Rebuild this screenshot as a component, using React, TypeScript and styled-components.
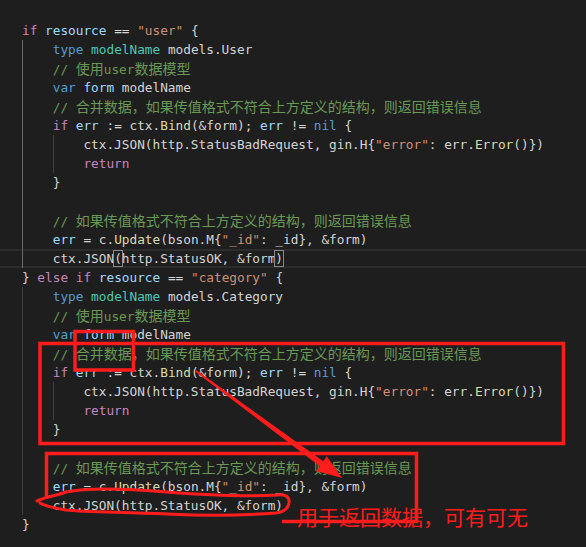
import React from 'react';
import styled, { createGlobalStyle } from 'styled-components';

type Kind = 'kw' | 'st' | 'ty' | 'va' | 'fn' | 'str' | 'cm' | 'pl' | 'br';
type Tok = [string, Kind];

interface CodeLine {
  indent: number;
  toks: Tok[];
  current?: boolean;
  active?: boolean;
}

const colors: Record<Kind, string> = {
  kw: '#c586c0',
  st: '#569cd6',
  ty: '#4ec9b0',
  va: '#9cdcfe',
  fn: '#dcdcaa',
  str: '#ce9178',
  cm: '#6a9955',
  pl: '#d4d4d4',
  br: '#d4d4d4',
};

const bindBlock = (active: boolean): CodeLine[] => [
  {
    indent: 1,
    active,
    toks: [
      ['if', 'kw'], [' ', 'pl'], ['err', 'va'], [' := ctx.', 'pl'], ['Bind', 'fn'],
      ['(&form); ', 'pl'], ['err', 'va'], [' != ', 'pl'], ['nil', 'st'], [' {', 'pl'],
    ],
  },
  {
    indent: 2,
    active,
    toks: [
      ['ctx.JSON(http.StatusBadRequest, gin.H{', 'pl'], ['"error"', 'str'], [': err.', 'pl'],
      ['Error', 'fn'], ['()})', 'pl'],
    ],
  },
  { indent: 2, active, toks: [['return', 'kw']] },
  { indent: 1, active, toks: [['}', 'pl']] },
  { indent: 1, active, toks: [] },
  { indent: 1, active, toks: [['// 如果传值格式不符合上方定义的结构，则返回错误信息', 'cm']] },
  {
    indent: 1,
    active,
    toks: [
      ['err', 'va'], [' = c.', 'pl'], ['Update', 'fn'], ['(bson.M{', 'pl'], ['"_id"', 'str'],
      [': _id}, &form)', 'pl'],
    ],
  },
];

const header = (model: string, active: boolean): CodeLine[] => [
  { indent: 1, active, toks: [['type', 'st'], [' ', 'pl'], ['modelName', 'ty'], [` models.${model}`, 'pl']] },
  { indent: 1, active, toks: [['// 使用user数据模型', 'cm']] },
  { indent: 1, active, toks: [['var', 'st'], [' ', 'pl'], ['form', 'va'], [' modelName', 'pl']] },
  { indent: 1, active, toks: [['// 合并数据，如果传值格式不符合上方定义的结构，则返回错误信息', 'cm']] },
];

const lines: CodeLine[] = [
  {
    indent: 0,
    toks: [['if', 'kw'], [' ', 'pl'], ['resource', 'va'], [' == ', 'pl'], ['"user"', 'str'], [' {', 'pl']],
  },
  ...header('User', true),
  ...bindBlock(true),
  {
    indent: 1,
    active: true,
    current: true,
    toks: [['ctx.JSON', 'pl'], ['(', 'br'], ['http.StatusOK, &form', 'pl'], [')', 'br']],
  },
  {
    indent: 0,
    toks: [
      ['} ', 'pl'], ['else', 'kw'], [' ', 'pl'], ['if', 'kw'], [' ', 'pl'], ['resource', 'va'],
      [' == ', 'pl'], ['"category"', 'str'], [' {', 'pl'],
    ],
  },
  ...header('Category', false),
  ...bindBlock(false),
  { indent: 1, toks: [['ctx.JSON(http.StatusOK, &form)', 'pl']] },
  { indent: 0, toks: [['}', 'pl']] },
];

const splitCjk = (text: string) =>
  text.split(/([\u3000-\u9fff\uff00-\uffef]+)/).filter(Boolean);

const isCjk = (text: string) => /[\u3000-\u9fff\uff00-\uffef]/.test(text);

const App = () => {
  return (
    <>
      <GlobalStyle />
      <StyledPage>
        <StyledEditor>
          {lines.map((line, i) => (
            <StyledLine key={i} $current={line.current}>
              {Array.from({ length: line.indent }).map((_, j) => (
                <StyledIndent key={j} $active={line.active && j === 0} />
              ))}
              {line.toks.map(([text, kind], k) =>
                kind === 'br' ? (
                  <StyledBracket key={k}>{text}</StyledBracket>
                ) : (
                  <StyledTok key={k} $kind={kind}>
                    {splitCjk(text).map((part, m) =>
                      isCjk(part) ? <StyledCjk key={m}>{part}</StyledCjk> : part
                    )}
                  </StyledTok>
                )
              )}
            </StyledLine>
          ))}
        </StyledEditor>

        {/* hand-drawn review marks over the code */}
        <StyledMarks viewBox="0 0 586 547" width="586" height="547">
          <g fill="none" stroke="#ff1c1c" strokeWidth="3.5" strokeLinejoin="miter">
            <rect x="75" y="331.5" width="58.5" height="38.5" />
            <rect x="40" y="343.5" width="523.5" height="100" />
            <path d="M46.5 499 V453.5 H416.5 V521.5 H282" />
            <path
              d="M37 501 C45 497 55 496 66 492 C85 488 120 488 167 492 C205 495 245 497 277 495
                 C284 494 290 496 289 503 C288 509 284 512 276 513 C250 515 210 516 167 514
                 C120 512 85 512 66 510 C54 508 45 506 40 503"
              strokeWidth="3"
              strokeLinecap="round"
            />
          </g>
          <polygon
            fill="#ff1c1c"
            points="195.4,371.8 319.8,466.2 316.3,471.1 342,478 326.7,456.3 323.2,461.2 196.6,370.2"
          />
        </StyledMarks>

        <StyledNote>用于返回数据，可有可无</StyledNote>
      </StyledPage>
    </>
  );
};

/**
 * styles
 */
const GlobalStyle = createGlobalStyle`
  html, body {
    margin: 0;
    padding: 0;
    background: #1e1e1e;
  }
`;

const StyledPage = styled.div`
  position: relative;
  width: 586px;
  height: 547px;
  overflow: hidden;
  background: #1e1e1e;
`;

const StyledEditor = styled.div`
  padding-top: 21px;
  font-family: 'DejaVu Sans Mono', monospace;
  font-size: 12.75px;
  color: #d4d4d4;
`;

const StyledLine = styled.div<{ $current?: boolean }>`
  height: 19px;
  line-height: 19px;
  padding-left: 22px;
  white-space: pre;
  box-shadow: ${(p) => (p.$current ? 'inset 0 2px 0 #2c2c2c, inset 0 -2px 0 #2c2c2c' : 'none')};
`;

const StyledIndent = styled.span<{ $active?: boolean }>`
  display: inline-block;
  box-sizing: border-box;
  width: 4ch;
  height: 19px;
  vertical-align: top;
  border-left: 1px solid ${(p) => (p.$active ? '#6a6a6a' : '#404040')};
`;

const StyledTok = styled.span<{ $kind: Kind }>`
  color: ${(p) => colors[p.$kind]};
`;

const StyledCjk = styled.span`
  font-family: 'Noto Sans CJK SC', sans-serif;
  font-size: 14px;
`;

const StyledBracket = styled.span`
  box-shadow: 0 0 0 1px #888888;
`;

const StyledMarks = styled.svg`
  position: absolute;
  top: 0;
  left: 0;
  pointer-events: none;
`;

const StyledNote = styled.span`
  position: absolute;
  left: 297px;
  top: 506px;
  font-family: 'Noto Sans CJK SC', sans-serif;
  font-size: 21px;
  line-height: 1;
  color: #ff1c1c;
  white-space: nowrap;
`;

export default App;
